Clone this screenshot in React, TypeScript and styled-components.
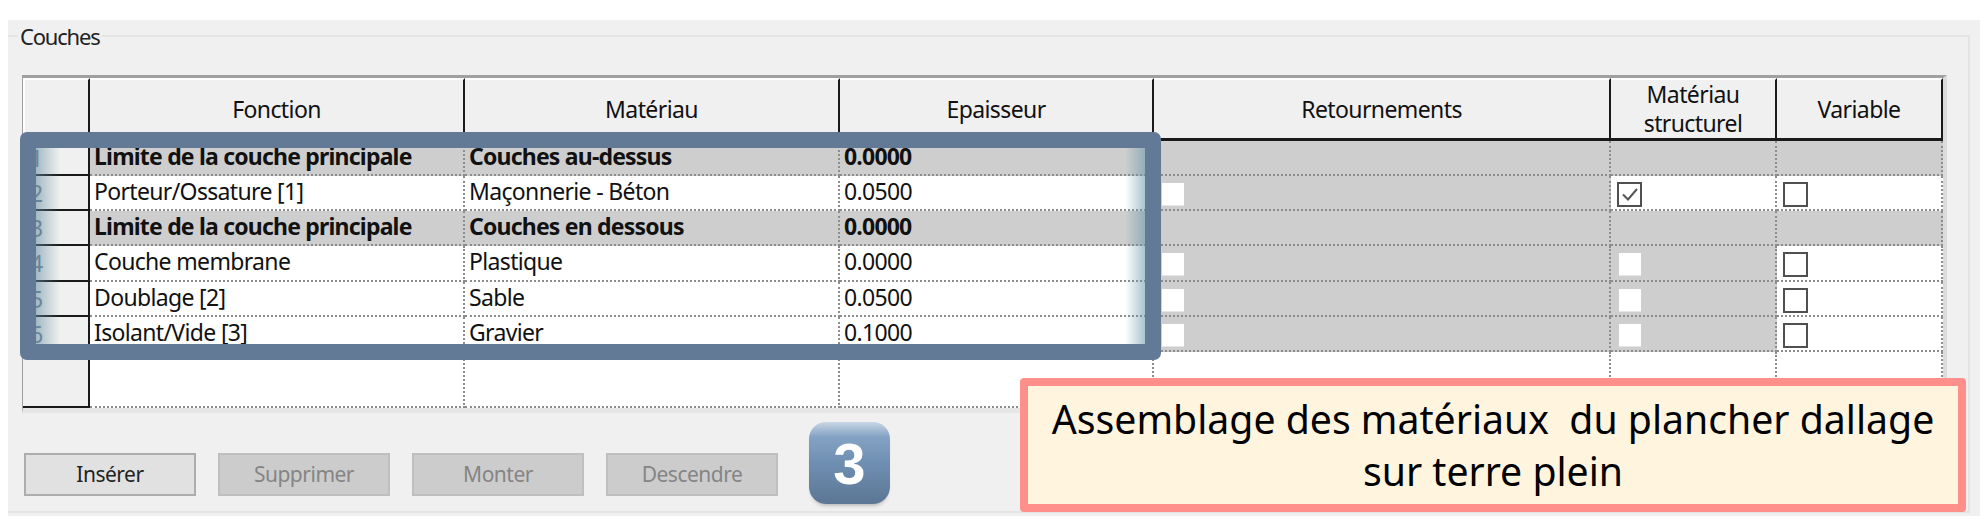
import React from 'react'
import styled, { createGlobalStyle } from 'styled-components'

const GlobalStyle = createGlobalStyle`
  html, body {
    margin: 0;
    padding: 0;
    background: #fff;
  }
`

type Check = 'none' | 'off' | 'on' | 'disabled'

type Row = {
  bold?: boolean
  fonction: string
  materiau: string
  epaisseur: string
  retour: Check
  structurel: Check
  variable: Check
  height: number
}

const rows: Row[] = [
  { bold: true, fonction: 'Limite de la couche principale', materiau: 'Couches au-dessus', epaisseur: '0.0000', retour: 'none', structurel: 'none', variable: 'none', height: 35 },
  { fonction: 'Porteur/Ossature [1]', materiau: 'Maçonnerie - Béton', epaisseur: '0.0500', retour: 'disabled', structurel: 'on', variable: 'off', height: 35 },
  { bold: true, fonction: 'Limite de la couche principale', materiau: 'Couches en dessous', epaisseur: '0.0000', retour: 'none', structurel: 'none', variable: 'none', height: 35 },
  { fonction: 'Couche membrane', materiau: 'Plastique', epaisseur: '0.0000', retour: 'disabled', structurel: 'disabled', variable: 'off', height: 36 },
  { fonction: 'Doublage [2]', materiau: 'Sable', epaisseur: '0.0500', retour: 'disabled', structurel: 'disabled', variable: 'off', height: 35 },
  { fonction: 'Isolant/Vide [3]', materiau: 'Gravier', epaisseur: '0.1000', retour: 'disabled', structurel: 'disabled', variable: 'off', height: 35 },
]

const CheckCell = ({ value, shaded }: { value: Check; shaded: boolean }) => (
  <Cell $shaded={shaded}>
    {value === 'disabled' && <DisabledBox />}
    {(value === 'off' || value === 'on') && (
      <CheckBox>
        {value === 'on' && (
          <svg width="18" height="17" viewBox="0 0 18 17">
            <path d="M2 8.5 L7 13.5 L16 3" fill="none" stroke="#555" strokeWidth="2" />
          </svg>
        )}
      </CheckBox>
    )}
  </Cell>
)

const TextCell = ({ bold, children }: { bold?: boolean; children: string }) => (
  <Cell $shaded={!!bold}>
    <CellText $bold={bold}>{children}</CellText>
  </Cell>
)

export default function App() {
  return (
    <Page>
      <GlobalStyle />
      <Panel>
        <Group>
          <Legend>Couches</Legend>
          <Table $rows={rows.map((r) => r.height)}>
            <Corner />
            <Head>Fonction</Head>
            <Head>Matériau</Head>
            <Head>Epaisseur</Head>
            <Head>Retournements</Head>
            <Head>
              Matériau
              <br />
              structurel
            </Head>
            <Head>Variable</Head>

            {rows.map((row, i) => (
              <React.Fragment key={i}>
                <RowNumber>{i + 1}</RowNumber>
                <TextCell bold={row.bold}>{row.fonction}</TextCell>
                <TextCell bold={row.bold}>{row.materiau}</TextCell>
                <TextCell bold={row.bold}>{row.epaisseur}</TextCell>
                <CheckCell value={row.retour} shaded />
                <CheckCell value={row.structurel} shaded={row.structurel !== 'on'} />
                <CheckCell value={row.variable} shaded={!!row.bold} />
              </React.Fragment>
            ))}

            <RowNumber />
            <Cell />
            <Cell />
            <Cell />
            <Cell />
            <Cell />
            <Cell />
          </Table>

          <Buttons>
            <ActionButton>Insérer</ActionButton>
            <ActionButton disabled>Supprimer</ActionButton>
            <ActionButton disabled>Monter</ActionButton>
            <ActionButton disabled>Descendre</ActionButton>
          </Buttons>
        </Group>

        <Frame />
        <Badge>3</Badge>
        <Callout>
          Assemblage des matériaux&nbsp; du plancher dallage
          <br />
          sur terre plein
        </Callout>
      </Panel>
    </Page>
  )
}

const Page = styled.div`
  width: 1988px;
  height: 528px;
  padding-top: 20px;
  box-sizing: border-box;
  overflow: hidden;
  font-family: 'Noto Sans', 'Open Sans', sans-serif;
  color: #111;
`

const Panel = styled.div`
  position: relative;
  display: flow-root;
  width: 1972px;
  height: 496px;
  margin-left: 8px;
  background: #f0f0f0;
  box-sizing: border-box;
`

const Group = styled.fieldset`
  margin: 4px 10px 0 0;
  height: 489px;
  padding: 0 0 0 14px;
  box-sizing: border-box;
  border: 2px solid #e4e4e4;
  border-left: 0;
  min-width: 0;
`

const Legend = styled.legend`
  margin-left: -4px;
  padding: 0 2px;
  font-size: 22px;
  line-height: 24px;
  letter-spacing: -1.2px;
  color: #222;
`

const Table = styled.div<{ $rows: number[] }>`
  display: grid;
  grid-template-columns: 67px 375px 375px 314px 457px 166px 166px;
  grid-template-rows: 63px ${(p) => p.$rows.map((h) => `${h}px`).join(' ')} 56px;
  width: 1920px;
  margin-top: 27px;
  border-top: 3px solid #a0a0a0;
  border-left: 1px solid #a0a0a0;
  border-bottom: 5px solid #e6e6e6;
  border-right: 4px solid #dcdcdc;
  background: #fff;
`

const Corner = styled.div`
  background: #f0f0f0;
  border: 2px solid #1a1a1a;
  border-top-color: #fff;
  border-left-color: #fff;
  border-bottom-width: 3px;
`

const Head = styled.div`
  display: flex;
  align-items: center;
  justify-content: center;
  text-align: center;
  background: #f0f0f0;
  border-top: 2px solid #fff;
  border-right: 2px solid #1a1a1a;
  border-bottom: 3px solid #1a1a1a;
  font-size: 23px;
  line-height: 29px;
  letter-spacing: -0.6px;
`

const RowNumber = styled.div`
  display: flex;
  align-items: center;
  padding-left: 7px;
  background: #f0f0f0;
  border-right: 2px solid #1a1a1a;
  border-bottom: 2px solid #1a1a1a;
  font-size: 23px;
  color: #6f7f8f;
`

const Cell = styled.div<{ $shaded?: boolean }>`
  display: flex;
  align-items: center;
  padding-left: 4px;
  box-sizing: border-box;
  background: ${(p) => (p.$shaded ? '#cecece' : '#fff')};
  border-right: 2px dotted #8c8c8c;
  border-bottom: 2px dotted #8c8c8c;
`

const CellText = styled.span<{ $bold?: boolean }>`
  margin-top: -4px;
  font-size: 23px;
  font-weight: ${(p) => (p.$bold ? 700 : 400)};
  letter-spacing: ${(p) => (p.$bold ? '-0.8px' : '-0.66px')};
  white-space: nowrap;
`

const DisabledBox = styled.span`
  display: block;
  width: 22px;
  height: 22px;
  margin: 3px 0 0 4px;
  background: #fff;
  border-bottom: 1px solid #e6e6e6;
`

const CheckBox = styled.span`
  display: flex;
  align-items: center;
  justify-content: center;
  width: 21px;
  height: 21px;
  margin: 3px 0 0 2px;
  border: 2px solid #505050;
  background: #fff;
`

const Buttons = styled.div`
  display: flex;
  gap: 22px;
  margin: 40px 0 0 2px;
`

const ActionButton = styled.button`
  width: 172px;
  height: 43px;
  padding: 0 0 2px;
  box-sizing: border-box;
  font-family: inherit;
  font-size: 21px;
  letter-spacing: -0.5px;
  color: #222;
  background: #e1e1e1;
  border: 2px solid #adadad;

  &:disabled {
    color: #858585;
    background: #cccccc;
    border-color: #bfbfbf;
  }
`

const Frame = styled.div`
  position: absolute;
  left: 12px;
  top: 112px;
  width: 1141px;
  height: 228px;
  box-sizing: border-box;
  border: 16px solid #627a96;
  border-radius: 7px;
  pointer-events: none;

  &::before,
  &::after {
    content: '';
    position: absolute;
    top: 0;
    bottom: 0;
  }
  &::before {
    left: 0;
    width: 24px;
    background: linear-gradient(to right, rgba(98, 140, 160, 0.55), rgba(200, 220, 225, 0));
  }
  &::after {
    right: 0;
    width: 20px;
    background: linear-gradient(to left, rgba(98, 150, 165, 0.55), rgba(200, 220, 225, 0));
  }
`

const Badge = styled.div`
  position: absolute;
  left: 801px;
  top: 402px;
  width: 81px;
  height: 82px;
  display: flex;
  align-items: center;
  justify-content: center;
  border-radius: 17px;
  background: linear-gradient(to bottom, #c9d6e4 0%, #84a3c4 18%, #6f8fb2 50%, #5c7694 100%);
  box-shadow: 0 4px 4px -3px rgba(0, 0, 0, 0.3);
  font-family: 'Liberation Sans', Arial, sans-serif;
  font-size: 58px;
  font-weight: 700;
  color: #fff;
`

const Callout = styled.div`
  position: absolute;
  left: 1012px;
  top: 358px;
  width: 946px;
  height: 134px;
  box-sizing: border-box;
  display: flex;
  align-items: center;
  justify-content: center;
  text-align: center;
  background: #fff5df;
  border: 8px solid #ff8f8a;
  border-radius: 4px;
  font-size: 39.2px;
  line-height: 52px;
  color: #000;
  white-space: nowrap;
`
